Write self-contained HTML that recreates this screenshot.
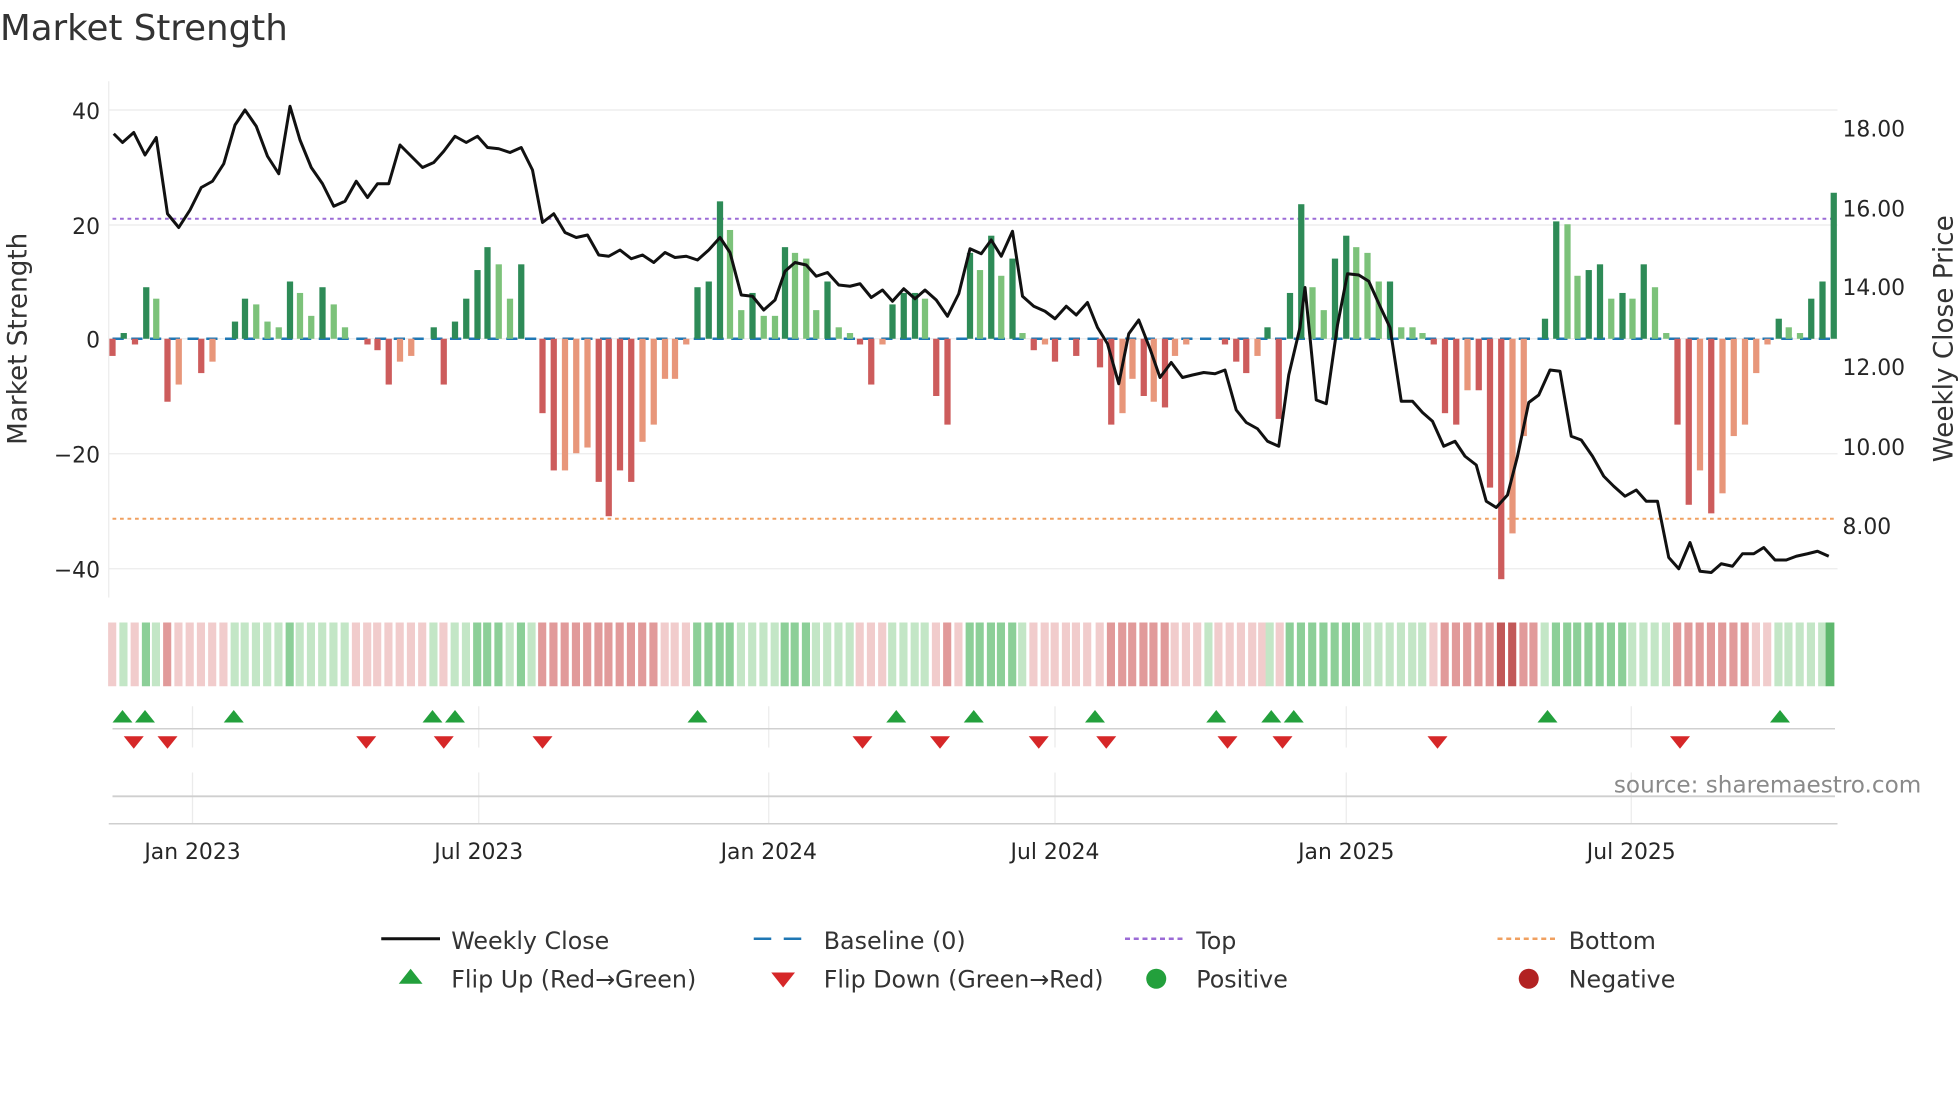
<!DOCTYPE html>
<html><head><meta charset="utf-8"><style>
html,body{margin:0;padding:0;background:#fff;}
svg{display:block;font-family:"DejaVu Sans","Liberation Sans",sans-serif;}
.g{fill:#2e8b57}.lg{fill:#7cc27a}.r{fill:#cd5c5c}.lr{fill:#e8967a}
.hg{fill:#8ccf98}.hlg{fill:#c3e6c6}.hr{fill:#f1cccc}.hmr{fill:#e19a9a}.hdr{fill:#c25858}
.t{font-size:17.5px;fill:#262626}
</style></head><body>
<svg width="1960" height="1102" viewBox="0 0 1568 881.6" xmlns="http://www.w3.org/2000/svg">
<text x="0" y="32" font-size="28.5" fill="#333">Market Strength</text>
<g stroke="#ebebeb" stroke-width="1">
<line x1="87" y1="88" x2="1470" y2="88"/><line x1="87" y1="180" x2="1470" y2="180"/><line x1="87" y1="271" x2="1470" y2="271"/><line x1="87" y1="363" x2="1470" y2="363"/><line x1="87" y1="455" x2="1470" y2="455"/>
<line x1="87" y1="65" x2="87" y2="478"/>
<line x1="154" y1="565" x2="154" y2="598"/><line x1="383" y1="565" x2="383" y2="598"/><line x1="615" y1="565" x2="615" y2="598"/><line x1="844" y1="565" x2="844" y2="598"/><line x1="1077" y1="565" x2="1077" y2="598"/><line x1="1305" y1="565" x2="1305" y2="598"/>
<line x1="154" y1="618" x2="154" y2="659"/><line x1="383" y1="618" x2="383" y2="659"/><line x1="615" y1="618" x2="615" y2="659"/><line x1="844" y1="618" x2="844" y2="659"/><line x1="1077" y1="618" x2="1077" y2="659"/><line x1="1305" y1="618" x2="1305" y2="659"/>
</g>
<line x1="90" y1="271" x2="1470" y2="271" stroke="#1f77b4" stroke-width="2" stroke-dasharray="9 6"/>
<line x1="90" y1="175" x2="1470" y2="175" stroke="#9b6bd6" stroke-width="1.6" stroke-dasharray="3 3"/>
<line x1="90" y1="415" x2="1470" y2="415" stroke="#f0a060" stroke-width="1.6" stroke-dasharray="3 3"/>
<g transform="translate(-2.5,271) scale(1,-4.58)">
<rect class="r" x="90" y="-3" width="5" height="3"/><rect class="g" x="99" y="0" width="5" height="1"/><rect class="r" x="108" y="-1" width="5" height="1"/><rect class="g" x="117" y="0" width="5" height="9"/><rect class="lg" x="125" y="0" width="5" height="7"/><rect class="r" x="134" y="-11" width="5" height="11"/><rect class="lr" x="143" y="-8" width="5" height="8"/><rect class="r" x="161" y="-6" width="5" height="6"/><rect class="lr" x="170" y="-4" width="5" height="4"/>
<rect class="g" x="188" y="0" width="5" height="3"/><rect class="g" x="196" y="0" width="5" height="7"/><rect class="lg" x="205" y="0" width="5" height="6"/><rect class="lg" x="214" y="0" width="5" height="3"/><rect class="lg" x="223" y="0" width="5" height="2"/><rect class="g" x="232" y="0" width="5" height="10"/><rect class="lg" x="240" y="0" width="5" height="8"/><rect class="lg" x="249" y="0" width="5" height="4"/><rect class="g" x="258" y="0" width="5" height="9"/><rect class="lg" x="267" y="0" width="5" height="6"/><rect class="lg" x="276" y="0" width="5" height="2"/>
<rect class="r" x="294" y="-1" width="5" height="1"/><rect class="r" x="302" y="-2" width="5" height="2"/><rect class="r" x="311" y="-8" width="5" height="8"/><rect class="lr" x="320" y="-4" width="5" height="4"/><rect class="lr" x="329" y="-3" width="5" height="3"/><rect class="g" x="347" y="0" width="5" height="2"/><rect class="r" x="355" y="-8" width="5" height="8"/><rect class="g" x="364" y="0" width="5" height="3"/><rect class="g" x="373" y="0" width="5" height="7"/><rect class="g" x="382" y="0" width="5" height="12"/><rect class="g" x="390" y="0" width="5" height="16"/><rect class="lg" x="399" y="0" width="5" height="13"/><rect class="lg" x="408" y="0" width="5" height="7"/><rect class="g" x="417" y="0" width="5" height="13"/>
<rect class="r" x="434" y="-13" width="5" height="13"/><rect class="r" x="443" y="-23" width="5" height="23"/><rect class="lr" x="452" y="-23" width="5" height="23"/><rect class="lr" x="461" y="-20" width="5" height="20"/><rect class="lr" x="470" y="-19" width="5" height="19"/><rect class="r" x="479" y="-25" width="5" height="25"/><rect class="r" x="487" y="-31" width="5" height="31"/><rect class="r" x="496" y="-23" width="5" height="23"/><rect class="r" x="505" y="-25" width="5" height="25"/><rect class="lr" x="514" y="-18" width="5" height="18"/><rect class="lr" x="523" y="-15" width="5" height="15"/><rect class="lr" x="532" y="-7" width="5" height="7"/><rect class="lr" x="540" y="-7" width="5" height="7"/><rect class="lr" x="549" y="-1" width="5" height="1"/>
<rect class="g" x="558" y="0" width="5" height="9"/><rect class="g" x="567" y="0" width="5" height="10"/><rect class="g" x="576" y="0" width="5" height="24"/><rect class="lg" x="584" y="0" width="5" height="19"/><rect class="lg" x="593" y="0" width="5" height="5"/><rect class="g" x="602" y="0" width="5" height="8"/><rect class="lg" x="611" y="0" width="5" height="4"/><rect class="lg" x="620" y="0" width="5" height="4"/><rect class="g" x="628" y="0" width="5" height="16"/><rect class="lg" x="636" y="0" width="5" height="15"/><rect class="lg" x="645" y="0" width="5" height="14"/><rect class="lg" x="653" y="0" width="5" height="5"/><rect class="g" x="662" y="0" width="5" height="10"/><rect class="lg" x="671" y="0" width="5" height="2"/><rect class="lg" x="680" y="0" width="5" height="1"/>
<rect class="r" x="688" y="-1" width="5" height="1"/><rect class="r" x="697" y="-8" width="5" height="8"/><rect class="lr" x="706" y="-1" width="5" height="1"/><rect class="g" x="714" y="0" width="5" height="6"/><rect class="g" x="723" y="0" width="5" height="8"/><rect class="g" x="732" y="0" width="5" height="8"/><rect class="lg" x="740" y="0" width="5" height="7"/><rect class="r" x="749" y="-10" width="5" height="10"/><rect class="r" x="758" y="-15" width="5" height="15"/>
<rect class="g" x="776" y="0" width="5" height="15"/><rect class="lg" x="784" y="0" width="5" height="12"/><rect class="g" x="793" y="0" width="5" height="18"/><rect class="lg" x="801" y="0" width="5" height="11"/><rect class="g" x="810" y="0" width="5" height="14"/><rect class="lg" x="818" y="0" width="5" height="1"/>
<rect class="r" x="827" y="-2" width="5" height="2"/><rect class="lr" x="836" y="-1" width="5" height="1"/><rect class="r" x="844" y="-4" width="5" height="4"/><rect class="r" x="861" y="-3" width="5" height="3"/><rect class="r" x="880" y="-5" width="5" height="5"/><rect class="r" x="889" y="-15" width="5" height="15"/><rect class="lr" x="898" y="-13" width="5" height="13"/><rect class="lr" x="906" y="-7" width="5" height="7"/><rect class="r" x="915" y="-10" width="5" height="10"/><rect class="lr" x="923" y="-11" width="5" height="11"/><rect class="r" x="932" y="-12" width="5" height="12"/><rect class="lr" x="940" y="-3" width="5" height="3"/><rect class="lr" x="949" y="-1" width="5" height="1"/>
<rect class="r" x="980" y="-1" width="5" height="1"/><rect class="r" x="989" y="-4" width="5" height="4"/><rect class="r" x="997" y="-6" width="5" height="6"/><rect class="lr" x="1006" y="-3" width="5" height="3"/><rect class="g" x="1014" y="0" width="5" height="2"/><rect class="r" x="1023" y="-14" width="5" height="14"/><rect class="g" x="1032" y="0" width="5" height="8"/><rect class="g" x="1041" y="0" width="5" height="23.5"/><rect class="lg" x="1050" y="0" width="5" height="9"/><rect class="lg" x="1059" y="0" width="5" height="5"/><rect class="g" x="1068" y="0" width="5" height="14"/><rect class="g" x="1077" y="0" width="5" height="18"/><rect class="lg" x="1085" y="0" width="5" height="16"/><rect class="lg" x="1094" y="0" width="5" height="15"/><rect class="lg" x="1103" y="0" width="5" height="10"/><rect class="g" x="1112" y="0" width="5" height="10"/><rect class="lg" x="1121" y="0" width="5" height="2"/><rect class="lg" x="1130" y="0" width="5" height="2"/><rect class="lg" x="1138" y="0" width="5" height="1"/>
<rect class="r" x="1147" y="-1" width="5" height="1"/><rect class="r" x="1156" y="-13" width="5" height="13"/><rect class="r" x="1165" y="-15" width="5" height="15"/><rect class="lr" x="1174" y="-9" width="5" height="9"/><rect class="r" x="1183" y="-9" width="5" height="9"/><rect class="r" x="1192" y="-26" width="5" height="26"/><rect class="r" x="1201" y="-42" width="5" height="42"/><rect class="lr" x="1210" y="-34" width="5" height="34"/><rect class="lr" x="1219" y="-17" width="5" height="17"/>
<rect class="g" x="1236" y="0" width="5" height="3.5"/><rect class="g" x="1245" y="0" width="5" height="20.5"/><rect class="lg" x="1254" y="0" width="5" height="20"/><rect class="lg" x="1262" y="0" width="5" height="11"/><rect class="g" x="1271" y="0" width="5" height="12"/><rect class="g" x="1280" y="0" width="5" height="13"/><rect class="lg" x="1289" y="0" width="5" height="7"/><rect class="g" x="1298" y="0" width="5" height="8"/><rect class="lg" x="1306" y="0" width="5" height="7"/><rect class="g" x="1315" y="0" width="5" height="13"/><rect class="lg" x="1324" y="0" width="5" height="9"/><rect class="lg" x="1333" y="0" width="5" height="1"/>
<rect class="r" x="1342" y="-15" width="5" height="15"/><rect class="r" x="1351" y="-29" width="5" height="29"/><rect class="lr" x="1360" y="-23" width="5" height="23"/><rect class="r" x="1369" y="-30.5" width="5" height="30.5"/><rect class="lr" x="1378" y="-27" width="5" height="27"/><rect class="lr" x="1387" y="-17" width="5" height="17"/><rect class="lr" x="1396" y="-15" width="5" height="15"/><rect class="lr" x="1405" y="-6" width="5" height="6"/><rect class="lr" x="1414" y="-1" width="5" height="1"/>
<rect class="g" x="1423" y="0" width="5" height="3.5"/><rect class="lg" x="1431" y="0" width="5" height="2"/><rect class="lg" x="1440" y="0" width="5" height="1"/><rect class="g" x="1449" y="0" width="5" height="7"/><rect class="g" x="1458" y="0" width="5" height="10"/><rect class="g" x="1467" y="0" width="5" height="25.5"/>
</g>
<polyline fill="none" stroke="#111" stroke-width="2.4" stroke-linejoin="round" points="91,107 98,114 107,106 116,124 125,110 134,171 143,182 152,168 161,150 170,145 179,131 188,100 196,88 205,101 214,125 223,139 232,85 240,112 249,134 258,147 267,165 276,161 285,145 294,158 302,147 311,147 320,116 329,125 338,134 347,130 355,121 364,109 373,114 382,109 390,118 399,119 408,122 417,118 426,136 434,178 443,171 452,186 461,190 470,188 479,204 487,205 496,200 505,207 514,204 523,210 532,202 540,206 549,205 558,208 567,200 576,190 584,202 593,236 602,237 611,248 620,240 628,217 636,210 645,212 653,221 662,218 671,228 680,229 688,227 697,238 706,232 714,241 723,231 732,239 740,232 749,240 758,253 767,235 776,199 785,203 793,192 801,205 810,185 818,237 827,245 836,249 844,255 853,245 861,252 870,242 878,262 886,275 895,307 903,267 911,256 920,279 928,302 937,290 946,302 954,300 963,298 972,299 980,296 989,328 997,338 1006,343 1014,353 1023,357 1031,300 1040,262 1044,230 1048,270 1053,320 1061,323 1070,260 1078,219 1087,220 1095,225 1104,245 1112,262 1121,321 1130,321 1138,330 1146,337 1155,357 1164,353 1172,365 1181,372 1189,401 1197,406 1206,396 1214,365 1223,322 1231,316 1240,296 1248,297 1257,349 1265,352 1274,365 1283,381 1291,389 1300,397 1309,392 1317,401 1326,401 1335,446 1343,455 1352,434 1360,457 1369,458 1377,451 1386,453 1394,443 1403,443 1411,438 1420,448 1429,448 1437,445 1446,443 1454,441 1463,445"/>
<g class="t" text-anchor="end">
<text x="80" y="95">40</text><text x="80" y="187">20</text><text x="80" y="278">0</text><text x="80" y="370">−20</text><text x="80" y="462">−40</text>
</g>
<g class="t">
<text x="1474" y="109">18.00</text><text x="1474" y="173">16.00</text><text x="1474" y="236">14.00</text><text x="1474" y="300">12.00</text><text x="1474" y="364">10.00</text><text x="1474" y="427">8.00</text>
</g>
<text transform="translate(21,271) rotate(-90)" text-anchor="middle" font-size="21" fill="#333">Market Strength</text>
<text transform="translate(1562,271) rotate(-90)" text-anchor="middle" font-size="21" fill="#333">Weekly Close Price</text>
<g transform="translate(-3.5,498)">
<rect class="hr" x="90" width="6.5" height="51"/><rect class="hlg" x="99" width="6.5" height="51"/><rect class="hr" x="108" width="6.5" height="51"/><rect class="hg" x="117" width="6.5" height="51"/><rect class="hlg" x="125" width="6.5" height="51"/><rect class="hmr" x="134" width="6.5" height="51"/><rect class="hr" x="143" width="6.5" height="51"/><rect class="hr" x="152" width="6.5" height="51"/><rect class="hr" x="161" width="6.5" height="51"/><rect class="hr" x="170" width="6.5" height="51"/><rect class="hr" x="179" width="6.5" height="51"/>
<rect class="hlg" x="188" width="6.5" height="51"/><rect class="hlg" x="196" width="6.5" height="51"/><rect class="hlg" x="205" width="6.5" height="51"/><rect class="hlg" x="214" width="6.5" height="51"/><rect class="hlg" x="223" width="6.5" height="51"/><rect class="hg" x="232" width="6.5" height="51"/><rect class="hlg" x="240" width="6.5" height="51"/><rect class="hlg" x="249" width="6.5" height="51"/><rect class="hlg" x="258" width="6.5" height="51"/><rect class="hlg" x="267" width="6.5" height="51"/><rect class="hlg" x="276" width="6.5" height="51"/>
<rect class="hr" x="285" width="6.5" height="51"/><rect class="hr" x="294" width="6.5" height="51"/><rect class="hr" x="302" width="6.5" height="51"/><rect class="hr" x="311" width="6.5" height="51"/><rect class="hr" x="320" width="6.5" height="51"/><rect class="hr" x="329" width="6.5" height="51"/><rect class="hr" x="338" width="6.5" height="51"/><rect class="hlg" x="347" width="6.5" height="51"/><rect class="hr" x="355" width="6.5" height="51"/>
<rect class="hlg" x="364" width="6.5" height="51"/><rect class="hlg" x="373" width="6.5" height="51"/><rect class="hg" x="382" width="6.5" height="51"/><rect class="hg" x="390" width="6.5" height="51"/><rect class="hg" x="399" width="6.5" height="51"/><rect class="hlg" x="408" width="6.5" height="51"/><rect class="hg" x="417" width="6.5" height="51"/><rect class="hlg" x="425.5" width="6.5" height="51"/>
<rect class="hmr" x="434" width="6.5" height="51"/><rect class="hmr" x="443" width="6.5" height="51"/><rect class="hmr" x="452" width="6.5" height="51"/><rect class="hmr" x="461" width="6.5" height="51"/><rect class="hmr" x="470" width="6.5" height="51"/><rect class="hmr" x="479" width="6.5" height="51"/><rect class="hmr" x="487" width="6.5" height="51"/><rect class="hmr" x="496" width="6.5" height="51"/><rect class="hmr" x="505" width="6.5" height="51"/><rect class="hmr" x="514" width="6.5" height="51"/><rect class="hmr" x="523" width="6.5" height="51"/><rect class="hr" x="532" width="6.5" height="51"/><rect class="hr" x="540" width="6.5" height="51"/><rect class="hr" x="549" width="6.5" height="51"/>
<rect class="hg" x="558" width="6.5" height="51"/><rect class="hg" x="567" width="6.5" height="51"/><rect class="hg" x="576" width="6.5" height="51"/><rect class="hg" x="584" width="6.5" height="51"/><rect class="hlg" x="593" width="6.5" height="51"/><rect class="hlg" x="602" width="6.5" height="51"/><rect class="hlg" x="611" width="6.5" height="51"/><rect class="hlg" x="620" width="6.5" height="51"/><rect class="hg" x="628" width="6.5" height="51"/><rect class="hg" x="636" width="6.5" height="51"/><rect class="hg" x="645" width="6.5" height="51"/><rect class="hlg" x="653" width="6.5" height="51"/><rect class="hlg" x="662" width="6.5" height="51"/><rect class="hlg" x="671" width="6.5" height="51"/><rect class="hlg" x="680" width="6.5" height="51"/>
<rect class="hr" x="688" width="6.5" height="51"/><rect class="hr" x="697" width="6.5" height="51"/><rect class="hr" x="706" width="6.5" height="51"/><rect class="hlg" x="714" width="6.5" height="51"/><rect class="hlg" x="723" width="6.5" height="51"/><rect class="hlg" x="732" width="6.5" height="51"/><rect class="hlg" x="740" width="6.5" height="51"/><rect class="hr" x="749" width="6.5" height="51"/><rect class="hmr" x="758" width="6.5" height="51"/><rect class="hr" x="767" width="6.5" height="51"/>
<rect class="hg" x="776" width="6.5" height="51"/><rect class="hg" x="784" width="6.5" height="51"/><rect class="hg" x="793" width="6.5" height="51"/><rect class="hg" x="801" width="6.5" height="51"/><rect class="hg" x="810" width="6.5" height="51"/><rect class="hlg" x="818" width="6.5" height="51"/>
<rect class="hr" x="827" width="6.5" height="51"/><rect class="hr" x="836" width="6.5" height="51"/><rect class="hr" x="844" width="6.5" height="51"/><rect class="hr" x="853" width="6.5" height="51"/><rect class="hr" x="861" width="6.5" height="51"/><rect class="hr" x="870" width="6.5" height="51"/><rect class="hr" x="880" width="6.5" height="51"/><rect class="hmr" x="889" width="6.5" height="51"/><rect class="hmr" x="898" width="6.5" height="51"/><rect class="hmr" x="906" width="6.5" height="51"/><rect class="hmr" x="915" width="6.5" height="51"/><rect class="hmr" x="923" width="6.5" height="51"/><rect class="hmr" x="932" width="6.5" height="51"/><rect class="hr" x="940" width="6.5" height="51"/><rect class="hr" x="949" width="6.5" height="51"/><rect class="hr" x="958" width="6.5" height="51"/><rect class="hlg" x="967" width="6.5" height="51"/><rect class="hr" x="975" width="6.5" height="51"/><rect class="hr" x="984" width="6.5" height="51"/><rect class="hr" x="993" width="6.5" height="51"/><rect class="hr" x="1002" width="6.5" height="51"/><rect class="hr" x="1010" width="6.5" height="51"/><rect class="hlg" x="1016" width="6.5" height="51"/><rect class="hr" x="1024" width="6.5" height="51"/>
<rect class="hg" x="1032" width="6.5" height="51"/><rect class="hg" x="1041" width="6.5" height="51"/><rect class="hg" x="1050" width="6.5" height="51"/><rect class="hg" x="1059" width="6.5" height="51"/><rect class="hg" x="1068" width="6.5" height="51"/><rect class="hg" x="1077" width="6.5" height="51"/><rect class="hg" x="1085" width="6.5" height="51"/><rect class="hlg" x="1094" width="6.5" height="51"/><rect class="hlg" x="1103" width="6.5" height="51"/><rect class="hlg" x="1112" width="6.5" height="51"/><rect class="hlg" x="1121" width="6.5" height="51"/><rect class="hlg" x="1130" width="6.5" height="51"/><rect class="hlg" x="1138" width="6.5" height="51"/>
<rect class="hr" x="1147" width="6.5" height="51"/><rect class="hmr" x="1156" width="6.5" height="51"/><rect class="hmr" x="1165" width="6.5" height="51"/><rect class="hmr" x="1174" width="6.5" height="51"/><rect class="hmr" x="1183" width="6.5" height="51"/><rect class="hmr" x="1192" width="6.5" height="51"/><rect class="hdr" x="1201" width="6.5" height="51"/><rect class="hdr" x="1210" width="6.5" height="51"/><rect class="hmr" x="1219" width="6.5" height="51"/><rect class="hmr" x="1227" width="6.5" height="51"/>
<rect class="hlg" x="1236" width="6.5" height="51"/><rect class="hg" x="1245" width="6.5" height="51"/><rect class="hg" x="1254" width="6.5" height="51"/><rect class="hg" x="1262" width="6.5" height="51"/><rect class="hg" x="1271" width="6.5" height="51"/><rect class="hg" x="1280" width="6.5" height="51"/><rect class="hg" x="1289" width="6.5" height="51"/><rect class="hg" x="1298" width="6.5" height="51"/><rect class="hlg" x="1306" width="6.5" height="51"/><rect class="hlg" x="1315" width="6.5" height="51"/><rect class="hlg" x="1324" width="6.5" height="51"/><rect class="hlg" x="1333" width="6.5" height="51"/>
<rect class="hmr" x="1342" width="6.5" height="51"/><rect class="hmr" x="1351" width="6.5" height="51"/><rect class="hmr" x="1360" width="6.5" height="51"/><rect class="hmr" x="1369" width="6.5" height="51"/><rect class="hmr" x="1378" width="6.5" height="51"/><rect class="hmr" x="1387" width="6.5" height="51"/><rect class="hmr" x="1396" width="6.5" height="51"/><rect class="hr" x="1405" width="6.5" height="51"/><rect class="hr" x="1414" width="6.5" height="51"/>
<rect class="hlg" x="1423" width="6.5" height="51"/><rect class="hlg" x="1431" width="6.5" height="51"/><rect class="hlg" x="1440" width="6.5" height="51"/><rect class="hlg" x="1449" width="6.5" height="51"/><rect class="hlg" x="1458" width="6.5" height="51"/><rect class="hg" x="1464" width="7" height="51" style="fill:#5fb86e"/>
</g>
<line x1="90" y1="583" x2="1468" y2="583" stroke="#d0d0d0" stroke-width="1.2"/>
<g fill="#23a03c">
<path d="M90,578h16l-8,-10z"/><path d="M108,578h16l-8,-10z"/><path d="M179,578h16l-8,-10z"/><path d="M338,578h16l-8,-10z"/><path d="M356,578h16l-8,-10z"/><path d="M550,578h16l-8,-10z"/><path d="M709,578h16l-8,-10z"/><path d="M771,578h16l-8,-10z"/><path d="M868,578h16l-8,-10z"/><path d="M965,578h16l-8,-10z"/><path d="M1009,578h16l-8,-10z"/><path d="M1027,578h16l-8,-10z"/><path d="M1230,578h16l-8,-10z"/><path d="M1416,578h16l-8,-10z"/>
</g>
<g fill="#d62728">
<path d="M99,589h16l-8,10z"/><path d="M126,589h16l-8,10z"/><path d="M285,589h16l-8,10z"/><path d="M347,589h16l-8,10z"/><path d="M426,589h16l-8,10z"/><path d="M682,589h16l-8,10z"/><path d="M744,589h16l-8,10z"/><path d="M823,589h16l-8,10z"/><path d="M877,589h16l-8,10z"/><path d="M974,589h16l-8,10z"/><path d="M1018,589h16l-8,10z"/><path d="M1142,589h16l-8,10z"/><path d="M1336,589h16l-8,10z"/>
</g>
<line x1="90" y1="637" x2="1468" y2="637" stroke="#cfcfcf" stroke-width="1.5"/>
<line x1="87" y1="659" x2="1470" y2="659" stroke="#cfcfcf" stroke-width="1.2"/>
<text x="1537" y="634" text-anchor="end" font-size="18.5" fill="#8a8a8a">source: sharemaestro.com</text>
<g class="t" text-anchor="middle">
<text x="154" y="687">Jan 2023</text><text x="383" y="687">Jul 2023</text><text x="615" y="687">Jan 2024</text><text x="844" y="687">Jul 2024</text><text x="1077" y="687">Jan 2025</text><text x="1305" y="687">Jul 2025</text>
</g>
<g font-size="19" fill="#333">
<line x1="305" y1="751" x2="352" y2="751" stroke="#111" stroke-width="2.4"/><text x="361" y="759">Weekly Close</text>
<path d="M319,787h19l-9.5,-12z" fill="#23a03c"/><text x="361" y="790">Flip Up (Red→Green)</text>
<line x1="603" y1="751" x2="650" y2="751" stroke="#1f77b4" stroke-width="2" stroke-dasharray="14 10"/><text x="659" y="759">Baseline (0)</text>
<path d="M617,778h19l-9.5,12z" fill="#d62728"/><text x="659" y="790">Flip Down (Green→Red)</text>
<line x1="900" y1="751" x2="947" y2="751" stroke="#9b6bd6" stroke-width="2" stroke-dasharray="4 3"/><text x="957" y="759">Top</text>
<circle cx="925" cy="783" r="8" fill="#23a03c"/><text x="957" y="790">Positive</text>
<line x1="1198" y1="751" x2="1245" y2="751" stroke="#f0a060" stroke-width="2" stroke-dasharray="4 3"/><text x="1255" y="759">Bottom</text>
<circle cx="1223" cy="783" r="8" fill="#b22222"/><text x="1255" y="790">Negative</text>
</g>
</svg>
</body></html>
